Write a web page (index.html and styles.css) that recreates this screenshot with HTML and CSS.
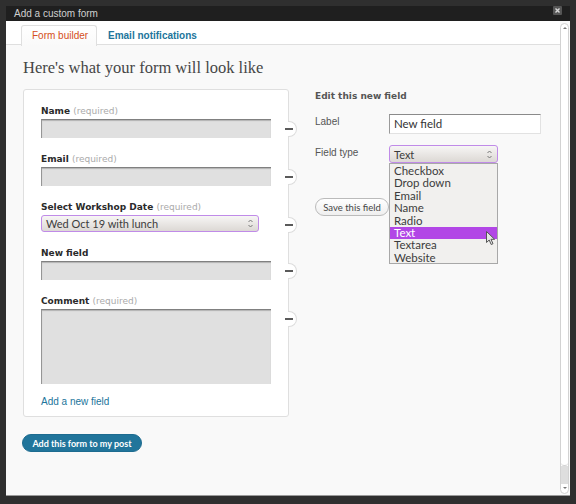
FILE: index.html
```html
<!DOCTYPE html>
<html lang="en">
<head>
    <meta charset="UTF-8">
    <meta name="viewport" content="width=device-width, initial-scale=1.0">
    <title>Add a custom form</title>
    <link rel="stylesheet" href="styles.css">
</head>
<body>
    <div class="dialog">
        <div class="titlebar">
            <span class="title">Add a custom form</span>
            <span class="close">
                <svg width="9" height="9" viewBox="0 0 9 9"><path d="M2.5 2.5 L6.5 6.5 M6.5 2.5 L2.5 6.5" stroke="#d8d8d8" stroke-width="1.4"/></svg>
            </span>
        </div>
        <div class="dialog-body">
            <div class="main">
                <div class="tabs">
                    <span class="tab active">Form builder</span>
                    <span class="tab">Email notifications</span>
                </div>
                <div class="content">
                    <h2>Here's what your form will look like</h2>
                    <div class="columns">
                        <div class="preview">
                            <div class="field">
                                <label>Name <span class="req">(required)</span></label>
                                <div class="fake-input"></div>
                                <span class="remove"></span>
                            </div>
                            <div class="field">
                                <label>Email <span class="req">(required)</span></label>
                                <div class="fake-input"></div>
                                <span class="remove"></span>
                            </div>
                            <div class="field">
                                <label>Select Workshop Date <span class="req">(required)</span></label>
                                <div class="select wide">
                                    <span>Wed Oct 19 with lunch</span>
                                    <svg class="spin" width="5" height="9" viewBox="0 0 5 9"><path d="M0.5 3 L2.5 1 L4.5 3 M0.5 6 L2.5 8 L4.5 6" fill="none" stroke="#777" stroke-width="1"/></svg>
                                </div>
                                <span class="remove"></span>
                            </div>
                            <div class="field">
                                <label>New field</label>
                                <div class="fake-input"></div>
                                <span class="remove"></span>
                            </div>
                            <div class="field last">
                                <label>Comment <span class="req">(required)</span></label>
                                <div class="fake-input textarea"></div>
                                <span class="remove"></span>
                            </div>
                            <a class="add-field" href="#">Add a new field</a>
                        </div>

                        <div class="edit">
                            <h3>Edit this new field</h3>
                            <div class="edit-row">
                                <span class="edit-label">Label</span>
                                <div class="text-input">New field</div>
                            </div>
                            <div class="edit-row">
                                <span class="edit-label">Field type</span>
                                <div class="select-wrap">
                                    <div class="select narrow">
                                        <span>Text</span>
                                        <svg class="spin" width="5" height="9" viewBox="0 0 5 9"><path d="M0.5 3 L2.5 1 L4.5 3 M0.5 6 L2.5 8 L4.5 6" fill="none" stroke="#777" stroke-width="1"/></svg>
                                    </div>
                                    <ul class="options">
                                        <li>Checkbox</li>
                                        <li>Drop down</li>
                                        <li>Email</li>
                                        <li>Name</li>
                                        <li>Radio</li>
                                        <li class="selected">Text</li>
                                        <li>Textarea</li>
                                        <li>Website</li>
                                    </ul>
                                    <svg class="cursor" width="10" height="15" viewBox="0 0 10 15"><path d="M0.5 0.5 L0.5 11.5 L3.2 9 L5.2 13.5 L7 12.7 L5 8.3 L8.6 8.3 Z" fill="#e4e4e4" stroke="#555" stroke-width="1"/></svg>
                                </div>
                            </div>
                            <button class="save-btn">Save this field</button>
                        </div>
                    </div>
                    <button class="primary-btn">Add this form to my post</button>
                </div>
            </div>
            <div class="scrollbar">
                <span class="sb-up"></span>
                <span class="sb-track"></span>
                <span class="sb-thumb"></span>
                <span class="sb-down"></span>
            </div>
        </div>
    </div>
</body>
</html>
```

FILE: styles.css
```css
html, body {
    margin: 0;
    height: 100%;
}
body {
    background-color: #2f2f2f;
    font-family: "Liberation Sans", Arial, sans-serif;
    padding: 6px 0 0 6px;
    box-sizing: border-box;
    overflow: hidden;
}
.dialog {
    width: 564px;
    height: 490px;
    background-color: #f9f9f9;
    display: flex;
    flex-direction: column;
    border-bottom: 1px solid #9a9a9a;
    box-sizing: border-box;
}
.titlebar {
    height: 15px;
    flex: none;
    background-color: #1f1f1f;
    display: flex;
    justify-content: space-between;
    align-items: flex-start;
    padding: 0 8px 0 8px;
}
.title {
    color: #cfcfcf;
    font-size: 10px;
    line-height: 15px;
}
.close {
    width: 9px;
    height: 9px;
    margin-top: 0;
    background-color: #555;
    border-radius: 1px;
    display: flex;
}
.dialog-body {
    flex: 1;
    display: flex;
    min-height: 0;
}
.main {
    flex: 1;
}
.tabs {
    height: 24px;
    background-color: #fff;
    border-bottom: 1px solid #dfdfdf;
    padding: 4px 0 0 15px;
    box-sizing: border-box;
    display: flex;
}
.tab {
    line-height: 20px;
    padding: 0 10px 0 10px;
    color: #21759b;
    font-weight: bold;
    font-size: 10px;
    border: 1px solid transparent;
    border-bottom: none;
}
.tab.active {
    color: #d54e21;
    font-weight: normal;
    width: 76px;
    padding: 0 0 0 10px;
    box-sizing: border-box;
    height: 21px;
    border-color: #dfdfdf;
    border-radius: 3px 3px 0 0;
    background: linear-gradient(#fff, #f9f9f9);
}
.content {
    padding: 0 17px;
}
h2 {
    font-family: "Liberation Serif", "Times New Roman", serif;
    font-weight: normal;
    font-size: 16.5px;
    line-height: 20px;
    color: #464646;
    margin: 13px 0 11px;
}
.columns {
    display: flex;
    align-items: flex-start;
}
.preview {
    width: 266px;
    box-sizing: border-box;
    background-color: #fff;
    border: 1px solid #dfdfdf;
    border-radius: 3px;
    padding: 15px 17px 8px 17px;
}
.field {
    position: relative;
    margin-bottom: 15px;
}
.field.last {
    margin-bottom: 12px;
}
.field label {
    display: block;
    font-family: "DejaVu Sans", Verdana, sans-serif;
    font-weight: bold;
    font-size: 9px;
    line-height: 12px;
    color: #2a2a2a;
    margin-bottom: 2px;
}
.req {
    font-weight: normal;
    color: #aaa;
}
.fake-input {
    height: 19px;
    box-sizing: border-box;
    background-color: #e0e0e0;
    border-top: 1px solid #808080;
    border-left: 1px solid #969696;
    box-shadow: inset 0 1px 1px rgba(0, 0, 0, 0.2);
}
.fake-input.textarea {
    height: 75px;
    margin-top: 1px;
}
.remove {
    position: absolute;
    right: -26px;
    top: 16px;
    width: 9px;
    height: 16px;
}
.remove::before {
    content: "";
    position: absolute;
    left: 0;
    top: 0;
    width: 8px;
    height: 14px;
    background-color: #fff;
    border: 1px solid #dcdcdc;
    border-left: none;
    border-radius: 0 8px 8px 0;
}
.remove::after {
    content: "";
    position: absolute;
    left: -3px;
    top: 7px;
    width: 8px;
    height: 2px;
    background-color: #5a5a5a;
}
.select {
    height: 17px;
    box-sizing: border-box;
    border: 1px solid #c08be8;
    border-radius: 3px;
    background: linear-gradient(#f7f6f5, #dcd8d4);
    display: flex;
    align-items: center;
    justify-content: space-between;
    padding: 0 5px 0 4px;
    font-family: Lato, "Open Sans", sans-serif;
    font-size: 11px;
    color: #3c3c3c;
}
.select.wide {
    width: 218px;
}
.select.narrow {
    width: 109px;
    height: 18px;
}
.add-field {
    display: block;
    font-size: 10px;
    line-height: 12px;
    color: #21759b;
    text-decoration: none;
}
.edit {
    margin: 1px 0 0 26px;
    width: 226px;
}
h3 {
    font-family: "DejaVu Sans", Verdana, sans-serif;
    font-size: 9px;
    line-height: 12px;
    color: #555;
    margin: 0 0 12px;
}
.edit-row {
    display: flex;
    align-items: flex-start;
    margin-bottom: 11px;
}
.edit-label {
    width: 74px;
    font-size: 10px;
    line-height: 12px;
    padding-top: 2px;
    color: #555;
}
.text-input {
    width: 152px;
    height: 20px;
    box-sizing: border-box;
    background-color: #fff;
    border: 1px solid #e2e2e2;
    border-top-color: #8a8a8a;
    border-left-color: #9a9a9a;
    font-family: Lato, "Open Sans", sans-serif;
    font-size: 11.5px;
    line-height: 18px;
    padding-left: 4px;
    color: #333;
}
.select-wrap {
    position: relative;
}
.options {
    position: absolute;
    top: 100%;
    left: 0;
    width: 109px;
    height: 101px;
    box-sizing: border-box;
    margin: 0;
    padding: 1px 0 0;
    list-style: none;
    background-color: #f1f0ee;
    border: 1px solid #a8a8a8;
    font-family: Lato, "Open Sans", sans-serif;
    font-size: 11.5px;
    line-height: 12.4px;
    color: #3c3c3c;
    z-index: 2;
}
.options li {
    padding-left: 4px;
}
.options li.selected {
    background-color: #b246e6;
    color: #fff;
}
.cursor {
    position: absolute;
    left: 97px;
    top: 86px;
    z-index: 3;
}
.save-btn {
    margin-top: 24px;
    width: 74px;
    height: 18px;
    border: 1px solid #bbb;
    border-radius: 10px;
    background: linear-gradient(#fff, #efefef);
    font-family: Lato, "Open Sans", sans-serif;
    font-size: 9.5px;
    color: #464646;
    padding: 0;
    text-align: center;
}
.primary-btn {
    display: block;
    margin: 17px 0 0 -1px;
    width: 120px;
    height: 18px;
    padding: 0;
    border: 1px solid #1e6c90;
    border-radius: 9px;
    background-color: #21759b;
    color: #fff;
    font-family: Lato, "Open Sans", sans-serif;
    font-weight: bold;
    font-size: 9px;
}
.scrollbar {
    width: 9px;
    margin: 2px 1px 1px 0;
    display: flex;
    flex-direction: column;
    border: 1px solid #d2d2d2;
    border-radius: 5px;
    box-sizing: border-box;
    background-color: #fff;
    overflow: hidden;
}
.sb-up, .sb-down {
    height: 9px;
    flex: none;
    position: relative;
}
.sb-up::after, .sb-down::after {
    content: "";
    position: absolute;
    left: 2px;
    top: 3px;
    border-left: 2px solid transparent;
    border-right: 2px solid transparent;
}
.sb-up::after {
    border-bottom: 2px solid #777;
}
.sb-down::after {
    border-top: 2px solid #777;
}
.sb-track {
    flex: 1;
    border-bottom: 1px solid #d2d2d2;
    border-radius: 0 0 4px 4px;
}
.sb-thumb {
    height: 18px;
    flex: none;
    background-color: #dedede;
}
```
